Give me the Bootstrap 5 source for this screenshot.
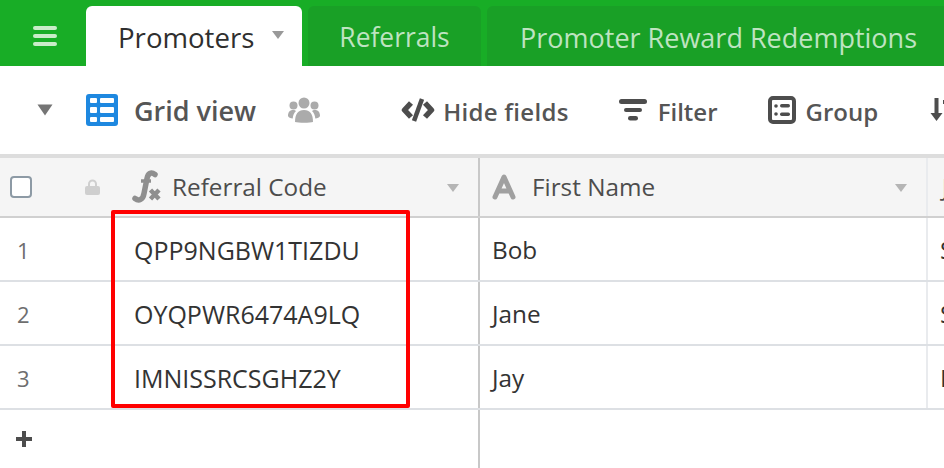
<!doctype html>
<html lang="en">
<head>
<meta charset="utf-8">
<title>Promoters</title>
<link href="https://cdn.jsdelivr.net/npm/bootstrap@5.3.0/dist/css/bootstrap.min.css" rel="stylesheet">
<style>
html,body{height:468px;overflow:hidden;background:#fff}
body{font-family:"Open Sans","Noto Sans",sans-serif;color:#333;width:944px}
.topbar{height:66px;background:#18ad26;padding-top:6px;overflow:hidden}
.menu-slot{width:86px;height:60px;flex:none;padding-left:4px}
.tabbox{height:60px;border-radius:6px 6px 0 0;background:#19a026;color:rgba(255,255,255,.72);font-size:26.4px;white-space:nowrap;flex:none;margin-left:6px;padding-top:4px}
.tabbox.on{background:#fff;color:#2f2f2f;margin-left:0;width:216px;font-size:27.6px;font-weight:500;padding-left:32px;position:relative}
.tab-b{width:173px;justify-content:center}
.tab-c{width:470px;padding-left:33px;font-size:27px}
.tab-arrow{position:absolute;left:185px;top:24px}
.toolrow{height:88px;padding-left:37px;color:#555;font-size:24px;font-weight:600;white-space:nowrap}
.toolrow svg{flex:none}
.toolrow span{padding-top:3px}
.gridlabel{margin-left:16px;font-size:27px}
.widertext{letter-spacing:.3px}
.toollabel{margin-left:10px}
.gridzone{position:relative;border-top:4px solid #ddd;height:314px}
.gridline{display:flex;height:64px;border-bottom:2px solid #dde0e4;font-size:24.3px;color:#333;align-items:stretch;white-space:nowrap;overflow:hidden}
.gridline.head{height:60px;background:#f5f5f5;border-bottom:2px solid #d0d0d0;color:#4d4d4d}
.leftcol{width:480px;flex:none;border-right:2px solid #c8c8c8;display:flex;align-items:center;position:relative}
.midcol{width:448px;flex:none;border-right:2px solid #e9ebee;display:flex;align-items:center;padding-left:12px}
.lastcol{flex:none;padding-left:12px;display:flex;align-items:center}
.gridline:not(.head) > div{padding-top:3px}
.head .lastcol{padding-left:14px}
.rownum{width:134px;padding-left:17px;color:#6e6e6e;font-size:22px}
.codeval{font-size:25px}
.checkfake{width:22px;height:22px;border:2px solid #8d9aa5;border-radius:4px;background:#fff;margin-left:10px;flex:none}
.lockicon{margin-left:53px;flex:none}
.fxicon{margin-left:32px;flex:none}
.headtext{margin-left:10px;font-size:24.3px}
.caret-end{position:absolute;right:18px;top:25px}
.addrow{height:58px;width:480px;border-right:2px solid #c8c8c8;padding-left:15px}
.redbox{position:absolute;left:111px;top:52px;width:299px;height:198px;border:4px solid #f00;border-radius:2px;pointer-events:none}
</style>
</head>
<body>
<div class="topbar d-flex align-items-start">
  <div class="menu-slot d-flex align-items-center justify-content-center">
    <svg width="26" height="22" viewBox="0 0 26 22" fill="#c9ecc9" aria-hidden="true"><rect x="1" y="1" width="24" height="4" rx="2"/><rect x="1" y="9" width="24" height="4" rx="2"/><rect x="1" y="17" width="24" height="4" rx="2"/></svg>
  </div>
  <div class="tabbox on d-flex align-items-center">Promoters
    <svg class="tab-arrow" width="14" height="10" viewBox="0 0 14 10" fill="#999" aria-hidden="true"><path d="M1 1h12L7 9z"/></svg>
  </div>
  <div class="tabbox tab-b d-flex align-items-center">Referrals</div>
  <div class="tabbox tab-c d-flex align-items-center">Promoter Reward Redemptions</div>
</div>

<div class="toolrow d-flex align-items-center">
  <svg width="16" height="12" viewBox="0 0 16 12" fill="#757575" aria-hidden="true"><path d="M.5.5h15L8 11.5z"/></svg>
  <svg style="margin-left:33px" width="32" height="32" viewBox="0 0 32 32" aria-hidden="true"><rect width="32" height="32" rx="3" fill="#1e88e0"/><g fill="#fff"><rect x="4" y="4" width="7" height="5" rx="1"/><rect x="14" y="4" width="14" height="5" rx="1"/><rect x="4" y="13" width="7" height="6" rx="1"/><rect x="14" y="13" width="14" height="6" rx="1"/><rect x="4" y="23" width="7" height="5" rx="1"/><rect x="14" y="23" width="14" height="5" rx="1"/></g></svg>
  <span class="gridlabel">Grid view</span>
  <svg style="margin-left:32px" width="32" height="26" viewBox="0 0 32 26" fill="#ababab" aria-hidden="true"><circle cx="16" cy="6" r="5.5"/><circle cx="5.5" cy="8.5" r="4"/><circle cx="26.500" cy="8.500" r="4"/><path d="M7 25c0-8 3-12 9-12s9 4 9 12c-2.500 1-15 1-18 0z"/><path d="M0 19c0-4 2-6 5-6 1.500 0 2.500.5 3 1-2 2-3 4-3.300 7.500C2.500 21.500.5 20.500 0 19zM32 19c0-4-2-6-5-6-1.500 0-2.500.5-3 1 2 2 3 4 3.300 7.500 2.200 0 4.200-1 4.700-2.500z"/></svg>
  <svg style="margin-left:81px" width="34" height="24" viewBox="0 0 34 24" fill="none" stroke="#4d4d4d" aria-hidden="true"><path d="M10 5 3.500 12l6.500 7M24 5l6.500 7-6.500 7" stroke-width="5.500" stroke-linejoin="round"/><path d="M21 1 13 23" stroke-width="4.500"/></svg>
  <span class="ms-2 widertext">Hide fields</span>
  <svg style="margin-left:49px" width="30" height="24" viewBox="0 0 30 24" fill="#4d4d4d" aria-hidden="true"><rect x="1" y="1" width="28" height="5" rx="2.500"/><rect x="6" y="10" width="18" height="4" rx="2"/><rect x="10" y="18" width="10" height="4.500" rx="2.200"/></svg>
  <span class="toollabel">Filter</span>
  <svg style="margin-left:50px" width="28" height="28" viewBox="0 0 28 28" fill="none" aria-hidden="true"><rect x="2" y="2" width="24" height="24" rx="3" stroke="#4d4d4d" stroke-width="4"/><g fill="#4d4d4d"><circle cx="8" cy="10" r="1.800"/><circle cx="8" cy="18" r="1.800"/><rect x="12" y="8" width="10" height="3.500" rx="1.700"/><rect x="12" y="16.500" width="10" height="3.500" rx="1.700"/></g></svg>
  <span class="toollabel">Group</span>
  <svg style="margin-left:52px" width="20" height="26" viewBox="0 0 20 26" fill="#4d4d4d" aria-hidden="true"><path d="M4.500 1h4v15h4l-6 8-6-8h4z"/><path d="M13 3h7v4h-7z"/></svg>
</div>

<div class="gridzone">
  <div class="gridline head">
    <div class="leftcol">
      <span class="checkfake"></span>
      <svg class="lockicon" width="15" height="16" viewBox="0 0 15 16" fill="#cfcfcf" aria-hidden="true"><path d="M3 7V5a4.500 4.500 0 0 1 9 0v2h-2V5a2.500 2.500 0 0 0-5 0v2z"/><rect y="7" width="15" height="9" rx="2"/></svg>
      <svg class="fxicon" width="30" height="34" viewBox="0 0 30 34" fill="none" stroke="#8f8f8f" aria-hidden="true"><path d="M23 4.500c-4-3-7-1-8 4l-3 15c-1 6-5 8-9 5" stroke-width="5.500" stroke-linecap="round"/><path d="M9 11h10" stroke-width="3.500"/><path d="M18.500 20l8.500 9M27 20l-8.500 9" stroke-width="4.500"/></svg>
      <span class="headtext">Referral Code</span>
      <svg class="caret-end" width="14" height="10" viewBox="0 0 14 10" fill="#b5b5b5" aria-hidden="true"><path d="M1 1h12L7 9z"/></svg>
    </div>
    <div class="midcol position-relative">
      <svg width="24" height="26" viewBox="0 0 24 26" fill="none" stroke="#a0a0a0" stroke-width="5" stroke-linejoin="round" stroke-linecap="round" aria-hidden="true"><path d="M3 23 12 3l9 20M7 17h10"/></svg>
      <span class="headtext ms-3">First Name</span>
      <svg class="caret-end" width="14" height="10" viewBox="0 0 14 10" fill="#b5b5b5" aria-hidden="true"><path d="M1 1h12L7 9z"/></svg>
    </div>
    <div class="lastcol">Jo</div>
  </div>
  <div class="gridline">
    <div class="leftcol"><span class="rownum">1</span><span class="codeval">QPP9NGBW1TIZDU</span></div>
    <div class="midcol">Bob</div><div class="lastcol">Smith</div>
  </div>
  <div class="gridline">
    <div class="leftcol"><span class="rownum">2</span><span class="codeval">OYQPWR6474A9LQ</span></div>
    <div class="midcol">Jane</div><div class="lastcol">Smith</div>
  </div>
  <div class="gridline">
    <div class="leftcol"><span class="rownum">3</span><span class="codeval">IMNISSRCSGHZ2Y</span></div>
    <div class="midcol">Jay</div><div class="lastcol">Lee</div>
  </div>
  <div class="addrow d-flex align-items-center">
    <svg width="18" height="18" viewBox="0 0 18 18" fill="#4d4d4d" aria-hidden="true"><path d="M7 1h4v6h6v4h-6v6H7v-6H1V7h6z"/></svg>
  </div>
  <div class="redbox"></div>
</div>
<script src="https://cdn.jsdelivr.net/npm/bootstrap@5.3.0/dist/js/bootstrap.bundle.min.js"></script>
</body>
</html>
